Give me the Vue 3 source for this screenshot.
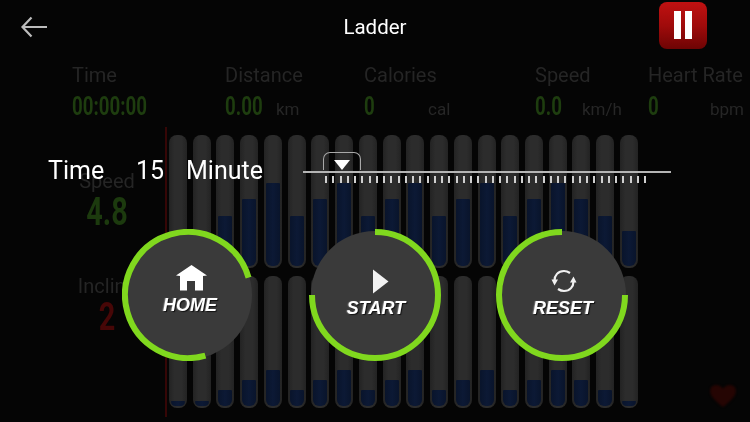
<script setup>
const metrics = [
  { label: 'Time', value: '00:00:00', unit: '', col: 153, valueWidth: 0 },
  { label: 'Distance', value: '0.00', unit: 'km', col: 139, valueWidth: 51 },
  { label: 'Calories', value: '0', unit: 'cal', col: 171, valueWidth: 64 },
  { label: 'Speed', value: '0.0', unit: 'km/h', col: 113, valueWidth: 47 },
  { label: 'Heart Rate', value: '0', unit: 'bpm', col: 102, valueWidth: 62 }
]
const topFills = [0, 0, 50, 67, 83, 50, 67, 83, 50, 67, 83, 50, 67, 83, 50, 67, 83, 67, 50, 35]
const bottomFills = [5, 5, 16, 26, 36, 16, 26, 36, 16, 26, 36, 16, 26, 36, 16, 26, 36, 26, 16, 5]
const ticks = Array.from({ length: 45 }, (_, i) => i)
const buttons = [
  { label: 'HOME', icon: 'home', rotate: 74 },
  { label: 'START', icon: 'play', rotate: -90 },
  { label: 'RESET', icon: 'reset', rotate: 0 }
]
</script>

<template>
  <div class="screen">
    <header class="topbar">
      <div class="top-left">
        <svg class="back" width="28" height="22" viewBox="0 0 28 22" fill="none">
          <path d="M27 11H2.500M11.500 1.500 2.500 11l9 9.500" stroke="#bcbcbc" stroke-width="2.200" />
        </svg>
      </div>
      <h1 class="title">Ladder</h1>
      <div class="top-right">
        <button class="pause" type="button" aria-label="Pause"><i></i><i></i></button>
      </div>
    </header>

    <section class="metrics">
      <div v-for="m in metrics" :key="m.label" class="metric" :style="{ width: m.col + 'px' }">
        <div class="metric-label">{{ m.label }}</div>
        <div class="metric-row">
          <span class="metric-value" :style="m.valueWidth ? { width: m.valueWidth + 'px' } : {}">{{ m.value }}</span>
          <span v-if="m.unit" class="metric-unit">{{ m.unit }}</span>
        </div>
      </div>
    </section>

    <main class="main">
      <aside class="side">
        <div class="side-label">Speed</div>
        <div class="side-value green">4.8</div>
        <div class="side-label incline">Incline</div>
        <div class="side-value red">2</div>
      </aside>
      <div class="chart">
        <div v-for="(f, i) in topFills" :key="'t' + i" class="bar">
          <div class="fill" :style="{ height: f + 'px' }"></div>
        </div>
        <div v-for="(f, i) in bottomFills" :key="'b' + i" class="bar">
          <div class="fill" :style="{ height: f + 'px' }"></div>
        </div>
      </div>
      <div class="heart-col">
        <svg class="heart" width="28" height="24" viewBox="0 0 30 26">
          <path d="M15 25C9 20 1 14 1 7.500 1 3.500 4 1 7.500 1 10.500 1 13.500 2.500 15 5 16.500 2.500 19.500 1 22.500 1 26 1 29 3.500 29 7.500 29 14 21 20 15 25Z" fill="#250503" />
        </svg>
      </div>
    </main>

    <div class="overlay">
      <div class="time-row">
        <span class="time-word">Time</span>
        <span class="time-num">15</span>
        <span class="time-unit">Minute</span>
        <div class="slider">
          <div class="thumb"><span class="thumb-arrow"></span></div>
          <div class="slider-line"></div>
          <div class="ticks"><span v-for="t in ticks" :key="t" class="tick"></span></div>
        </div>
      </div>

      <div class="buttons">
        <button v-for="b in buttons" :key="b.label" class="round" :class="'round-' + b.icon" type="button">
          <svg class="ring" width="132" height="132" viewBox="0 0 132 132">
            <circle cx="66" cy="66" r="64" fill="#3a3a3a" />
            <circle
              cx="66" cy="66" r="63" fill="none" stroke="#80d81e" stroke-width="6"
              pathLength="360" stroke-dasharray="270 90"
              :transform="`rotate(${b.rotate} 66 66)`"
            />
          </svg>
          <span class="round-content">
            <svg v-if="b.icon === 'home'" class="icon" width="36" height="27" viewBox="0 0 36 27">
              <path d="M19.500 0 35 10.500 31 11V25.500H23V16H15V25.500H8V11L4 10.500Z" fill="#fff" />
            </svg>
            <svg v-else-if="b.icon === 'play'" class="icon" width="32" height="27" viewBox="0 0 32 27">
              <path d="M13 1.500 28.500 13.500 13 25.500Z" fill="#f2f2f2" />
            </svg>
            <svg v-else class="icon" width="32" height="27" viewBox="-1 0 32 27" fill="none">
              <path d="M6.500 13C6.500 8 10 3.500 16 3.500 18.500 3.500 20.500 4.500 22 5.500" stroke="#f0f0f0" stroke-width="2.200" />
              <path d="M25.500 14C25.500 19 22 23.500 16 23.500 13.500 23.500 11.500 22.500 10 21.500" stroke="#f0f0f0" stroke-width="2.200" />
              <path d="M3.500 12H10L6.500 18Z" fill="#f0f0f0" />
              <path d="M22 15H28.500L25.500 9Z" fill="#f0f0f0" />
            </svg>
            <span class="round-label">{{ b.label }}</span>
          </span>
        </button>
      </div>
    </div>
  </div>
</template>

<style>
html, body { margin: 0; background: #050505; }
</style>

<style scoped>
.screen {
  position: relative;
  width: 750px;
  height: 422px;
  overflow: hidden;
  background: #050505;
  font-family: Roboto, "Liberation Sans", sans-serif;
  filter: blur(0.35px);
}
.topbar {
  display: grid;
  grid-template-columns: 1fr auto 1fr;
  align-items: center;
  height: 58px;
}
.top-left { padding-left: 20px; display: flex; padding-bottom: 4px; }
.title {
  margin: 0;
  color: #fff;
  font-size: 20.500px;
  font-weight: 400;
  line-height: 1;
  padding-bottom: 3px;
}
.top-right { display: flex; justify-content: flex-end; padding-right: 43px; padding-bottom: 8px; }
.pause {
  width: 48px;
  height: 47px;
  padding: 0;
  border: 0;
  border-radius: 8px;
  background: linear-gradient(#c01111, #a00b0b 50%, #6e0404);
  display: flex;
  align-items: center;
  justify-content: center;
  gap: 4px;
}
.pause i { display: block; width: 7px; height: 28px; background: #fff; }

.metrics {
  display: flex;
  padding-left: 72px;
  height: 63px;
  margin-top: 6px;
}
.metric { flex: none; }
.metric-label { font-size: 20px; line-height: 22px; color: #252525; white-space: nowrap; }
.metric-row { display: flex; align-items: baseline; margin-top: 5px; }
.metric-value {
  display: inline-block;
  font-size: 26px;
  font-weight: 700;
  line-height: 30px;
  color: #1e3d0f;
  transform: scaleX(0.72);
  transform-origin: left center;
  white-space: nowrap;
  flex: none;
}
.metric-unit { font-size: 17px; color: #262626; white-space: nowrap; }

.main { display: flex; height: 295px; }
.side {
  width: 167px;
  flex: none;
  box-sizing: border-box;
  padding: 43px 0 0 49px;
  border-right: 2px solid #360606;
  height: 290px;
  text-align: center;
}
.side-label { font-size: 20px; line-height: 22px; color: #252525; }
.side-value {
  margin-top: -2px;
  font-weight: 700;
  font-size: 39px;
  line-height: 44px;
  transform: scaleX(0.74);
}
.green { color: #1c3a0e; }
.red { color: #470707; }
.incline { margin-top: 41px; }
.chart {
  display: grid;
  grid-template-columns: repeat(20, 18px);
  grid-template-rows: 133px 132px;
  column-gap: 5.740px;
  row-gap: 8px;
  padding: 8px 0 0 2px;
  align-content: start;
  flex: none;
}
.bar {
  display: flex;
  flex-direction: column;
  justify-content: flex-end;
  box-sizing: border-box;
  padding: 0 2px 2px;
  border-radius: 8px;
  background: linear-gradient(90deg, #232323, #2c2c2c 30%, #2c2c2c 70%, #232323);
}
.fill {
  border-radius: 1px 1px 6px 6px;
  background: linear-gradient(90deg, #09142b, #0c1935 50%, #09142b);
}
.heart-col {
  flex: 1;
  display: flex;
  justify-content: flex-end;
  align-items: flex-end;
  padding: 0 13px 14px 0;
}
.heart { filter: blur(1px); }

.overlay {
  position: absolute;
  inset: 0;
}
.time-row {
  display: flex;
  align-items: flex-start;
  padding: 152px 0 0 48px;
  color: #fff;
  font-size: 25px;
  line-height: 38px;
}
.time-word { width: 88px; }
.time-num { width: 50px; }
.time-unit { width: 117px; }
.slider { width: 368px; display: flex; flex-direction: column; }
.thumb {
  box-sizing: border-box;
  width: 38px;
  height: 18px;
  margin-left: 20px;
  border: 1.500px solid #a8a8a8;
  border-bottom: 0;
  border-radius: 7px 7px 0 0;
  display: flex;
  align-items: flex-end;
  justify-content: center;
}
.thumb-arrow {
  width: 0;
  height: 0;
  border-left: 8.500px solid transparent;
  border-right: 8.500px solid transparent;
  border-top: 10px solid #fff;
}
.slider-line { height: 2px; margin-top: 1px; background: #b5b5b5; }
.ticks {
  display: flex;
  justify-content: space-between;
  margin: 3px 25px 0 22px;
}
.tick { width: 2px; height: 7px; background: #cfcfcf; }

.buttons {
  position: absolute;
  top: 229px;
  left: 122px;
  display: flex;
  gap: 55px;
}
.round {
  position: relative;
  width: 132px;
  height: 132px;
  padding: 0;
  border: 0;
  background: none;
  display: flex;
  align-items: center;
  justify-content: center;
}
.ring { position: absolute; inset: 0; }
.round-content {
  position: relative;
  display: flex;
  flex-direction: column;
  align-items: center;
  margin-top: 3px;
}
.round-home .round-content { transform: translate(2px, -6px); }
.round-play .round-content { transform: translate(1px, -3px); }
.round-reset .round-content { transform: translate(1px, -3.500px); }
.icon { display: block; }
.round-label {
  color: #fff;
  font-family: "Liberation Sans", Arial, sans-serif;
  font-size: 18px;
  font-weight: 700;
  font-style: italic;
  line-height: 22px;
  margin-top: 2px;
  text-shadow: 1px 1px 1px #111, -1px 0 1px #777;
}
</style>
